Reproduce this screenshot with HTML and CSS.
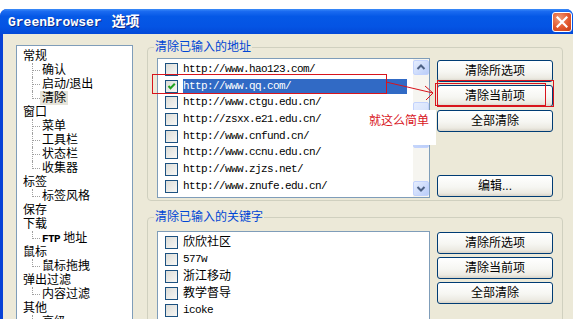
FILE: index.html
```html
<!DOCTYPE html>
<html lang="zh-CN">
<head>
<meta charset="utf-8">
<title>GreenBrowser 选项</title>
<link rel="stylesheet" href="styles.css">
</head>
<body>
<div class="window">
  <div class="titlebar">
    <span class="title">GreenBrowser <span class="title-cjk">选项</span></span>
    <span class="close"><svg width="12" height="12" viewBox="0 0 12 12"><path d="M1.5 1.5 L10.5 10.5 M10.5 1.5 L1.5 10.5" stroke="#fff" stroke-width="2.2" stroke-linecap="square"/></svg></span>
  </div>
  <div class="client">
    <ul class="tree">
      <li><span class="t">常规</span>
        <ul class="kids"><li><span class="tt">确认</span></li><li><span class="tt">启动/退出</span></li><li class="sel"><span class="tt">清除</span></li></ul>
      </li>
      <li><span class="t">窗口</span>
        <ul class="kids"><li><span class="tt">菜单</span></li><li><span class="tt">工具栏</span></li><li><span class="tt">状态栏</span></li><li><span class="tt">收集器</span></li></ul>
      </li>
      <li><span class="t">标签</span>
        <ul class="kids"><li><span class="tt">标签风格</span></li></ul>
      </li>
      <li><span class="t">保存</span></li>
      <li><span class="t">下载</span>
        <ul class="kids"><li><span class="tt"><span class="lat-b">FTP</span> 地址</span></li></ul>
      </li>
      <li><span class="t">鼠标</span>
        <ul class="kids"><li><span class="tt">鼠标拖拽</span></li></ul>
      </li>
      <li><span class="t">弹出过滤</span>
        <ul class="kids"><li><span class="tt">内容过滤</span></li></ul>
      </li>
      <li><span class="t">其他</span>
        <ul class="kids"><li><span class="tt">高级</span></li></ul>
      </li>
    </ul>

    <div class="panel">
      <fieldset class="group g-addr">
        <legend>清除已输入的地址</legend>
        <div class="gbody">
          <div class="listbox lb-addr">
            <div class="items">
              <div class="row"><span class="cb"></span><span class="lbl lat">http://www.hao123.com/</span></div>
              <div class="row"><span class="cb on"><svg width="11" height="11" viewBox="0 0 11 11"><path d="M2.5 5 L4.5 7.2 L8.8 2.8" fill="none" stroke="#21A121" stroke-width="2"/></svg></span><span class="lbl lat sel">http://www.qq.com/</span></div>
              <div class="row"><span class="cb"></span><span class="lbl lat">http://www.ctgu.edu.cn/</span></div>
              <div class="row"><span class="cb"></span><span class="lbl lat">http://zsxx.e21.edu.cn/</span></div>
              <div class="row"><span class="cb"></span><span class="lbl lat">http://www.cnfund.cn/</span></div>
              <div class="row"><span class="cb"></span><span class="lbl lat">http://www.ccnu.edu.cn/</span></div>
              <div class="row"><span class="cb"></span><span class="lbl lat">http://www.zjzs.net/</span></div>
              <div class="row"><span class="cb"></span><span class="lbl lat">http://www.znufe.edu.cn/</span></div>
            </div>
            <div class="sb">
              <span class="sbtn"><svg width="14" height="13" viewBox="0 0 14 13"><path d="M3.5 8 L7 4.5 L10.5 8" fill="none" stroke="#4D6185" stroke-width="2"/></svg></span>
              <span class="thumb"><i></i><i></i><i></i><i></i></span>
              <span class="sbtn down"><svg width="14" height="13" viewBox="0 0 14 13"><path d="M3.5 5 L7 8.5 L10.5 5" fill="none" stroke="#4D6185" stroke-width="2"/></svg></span>
            </div>
          </div>
          <div class="btns">
            <span class="btn">清除所选项</span>
            <span class="btn">清除当前项</span>
            <span class="btn">全部清除</span>
            <span class="btn btn-edit">编辑...</span>
          </div>
        </div>
      </fieldset>

      <fieldset class="group g-kw">
        <legend>清除已输入的关键字</legend>
        <div class="gbody">
          <div class="listbox lb-kw">
            <div class="items">
              <div class="row"><span class="cb"></span><span class="lbl">欣欣社区</span></div>
              <div class="row"><span class="cb"></span><span class="lbl lat">577w</span></div>
              <div class="row"><span class="cb"></span><span class="lbl">浙江移动</span></div>
              <div class="row"><span class="cb"></span><span class="lbl">教学督导</span></div>
              <div class="row"><span class="cb"></span><span class="lbl lat">icoke</span></div>
            </div>
          </div>
          <div class="btns">
            <span class="btn">清除所选项</span>
            <span class="btn">清除当前项</span>
            <span class="btn">全部清除</span>
          </div>
        </div>
      </fieldset>
    </div>

    <div class="mark mark-row"></div>
    <svg class="arrow" width="54" height="26" viewBox="0 0 54 26"><path d="M2 6 L49 17 M49 17 L41 10 M49 17 L42 24" fill="none" stroke="#D8141C" stroke-width="1"/></svg>
    <div class="mark mark-btn-a"></div>
    <div class="mark mark-btn-b"></div>
    <div class="note">就这么简单</div>
  </div>
</div>
</body>
</html>
```

FILE: styles.css
```css
* { box-sizing: border-box; }
html, body { margin: 0; padding: 0; }
body {
  width: 573px;
  height: 319px;
  overflow: hidden;
  background: #fff;
  font-family: "Liberation Sans", "Noto Sans CJK SC", sans-serif;
  font-size: 12px;
  color: #000;
}

.window {
  margin-top: 9px;
  width: 573px;
  height: 310px;
  border-radius: 7px 7px 0 0;
  background: #0842D6;
  overflow: hidden;
  display: flex;
  flex-direction: column;
}

.titlebar {
  height: 25px;
  flex: none;
  display: flex;
  align-items: center;
  justify-content: space-between;
  padding: 0 1px 0 8px;
  background: linear-gradient(#3C8CF8 0, #1A6AF0 10%, #0558E6 30%, #0454E4 70%, #0349D8 100%);
}
.title {
  color: #fff;
  font-family: "Liberation Mono", "Noto Sans CJK SC", monospace;
  font-weight: bold;
  font-size: 13px;
  line-height: 16px;
  white-space: nowrap;
  text-shadow: 1px 1px #0D2B8C;
}
.title-cjk {
  font-family: "Liberation Sans", "Noto Sans CJK SC", sans-serif;
  font-size: 14px;
  margin-left: 2px;
}
.close {
  width: 20px;
  height: 20px;
  border: 1px solid #fff;
  border-radius: 3px;
  background: radial-gradient(circle at 35% 30%, #F09A78 0, #E2572D 55%, #C43E16 100%);
  display: flex;
  align-items: center;
  justify-content: center;
}

.client {
  position: relative;
  flex: 1;
  margin-left: 3px;
  background: #ECE9D8;
  display: flex;
  align-items: flex-start;
  gap: 14px;
  padding: 7px 0 0 13px;
}

/* tree */
.tree {
  list-style: none;
  margin: 4px 0 0 0;
  padding: 3px 0 0 0;
  width: 117px;
  height: 300px;
  flex: none;
  border: 1px solid #7F9DB9;
  background: #fff;
  overflow: hidden;
}
.tree ul { list-style: none; margin: 0; padding: 0; }
.tree li { line-height: 14px; }
.t {
  display: block;
  height: 14px;
  padding-left: 6px;
  white-space: nowrap;
}
.kids li {
  position: relative;
  height: 14px;
  padding-left: 23px;
  white-space: nowrap;
}
.kids li::before {
  content: "";
  position: absolute;
  left: 15px;
  top: 0;
  width: 7px;
  height: 7px;
  border-left: 1px dotted #A0A0A0;
  border-bottom: 1px dotted #A0A0A0;
}
.kids li:not(:last-child)::after {
  content: "";
  position: absolute;
  left: 15px;
  top: 7px;
  bottom: 0;
  border-left: 1px dotted #A0A0A0;
}
.tt {
  display: inline-block;
  height: 14px;
  padding: 0 2px;
}
.kids li.sel .tt { background: #E6E4DA; }
.lat-b {
  font-family: "Liberation Mono", monospace;
  font-size: 11px;
  font-weight: bold;
  letter-spacing: -0.6px;
}

/* right panel */
.panel {
  width: 416px;
  flex: none;
  display: flex;
  flex-direction: column;
  gap: 10px;
}
.group {
  margin: 0;
  padding: 5px 9px 2px 9px;
  border: 1px solid #D0D0BF;
  border-radius: 4px;
  min-width: 0;
}
.group legend {
  padding: 0 1px;
  margin-left: -3px;
  font-size: 12px;
  line-height: 12px;
  color: #0046D5;
}
.g-kw {
  padding-top: 8px;
  height: 140px;
}
.gbody {
  display: flex;
  gap: 7px;
  align-items: stretch;
  height: 100%;
}

.listbox {
  width: 273px;
  flex: none;
  border: 1px solid #7F9DB9;
  background: #fff;
  display: flex;
}
.lb-addr { height: 140px; }
.lb-kw { height: 120px; }
.items {
  flex: 1;
  min-width: 0;
  padding-top: 2px;
}
.lb-kw .items { padding-top: 2px; }
.row {
  display: flex;
  align-items: center;
  height: 16.7px;
  padding-left: 7px;
}
.lb-kw .row { height: 17px; }
.cb {
  width: 13px;
  height: 13px;
  flex: none;
  margin-right: 5px;
  border: 1px solid #1C5180;
  background: linear-gradient(135deg, #DCDCD7, #F7F7F5);
  display: flex;
  align-items: center;
  justify-content: center;
}
.lbl {
  flex: 1;
  height: 15px;
  line-height: 15px;
  margin-right: 6px;
  white-space: nowrap;
}
.lbl.sel { background: #316AC5; color: #fff; }
.lat {
  font-family: "Liberation Mono", monospace;
  font-size: 11px;
  letter-spacing: -0.6px;
}

/* scrollbar */
.sb {
  width: 16px;
  flex: none;
  background: #F6F5F0;
  display: flex;
  flex-direction: column;
  padding: 1px 0 1px 0;
}
.sbtn, .thumb {
  display: flex;
  align-items: center;
  justify-content: center;
  border: 1px solid #C3D3FD;
  border-radius: 2px;
  background: linear-gradient(135deg, #E6EEFE, #BACDF9);
}
.sbtn { height: 15px; }
.sbtn.down { margin-top: auto; }
.thumb {
  margin-top: 27px;
  height: 46px;
  flex-direction: column;
  gap: 1px;
}
.thumb i {
  display: block;
  width: 7px;
  height: 1px;
  background: #8CB0F8;
}

/* buttons */
.btns {
  width: 116px;
  flex: none;
  display: flex;
  flex-direction: column;
  gap: 3px;
  padding: 2px 0 1px 0;
}
.g-kw .btns { padding-top: 1px; }
.btn {
  height: 22px;
  flex: none;
  display: flex;
  align-items: center;
  justify-content: center;
  border: 1px solid #003C74;
  border-radius: 3px;
  background: linear-gradient(#FFFFFF 0, #F6F6F2 55%, #ECEAE2 85%, #D8D3C8 100%);
  font-size: 12px;
  line-height: 14px;
}
.btn-edit { margin-top: auto; }

/* annotations */
.mark {
  position: absolute;
  border: 1px solid #D8141C;
}
.mark-row { left: 149px; top: 40px; width: 235px; height: 20px; }
.mark-btn-a { left: 434px; top: 46px; width: 117px; height: 27px; }
.mark-btn-b { left: 432px; top: 49px; width: 111px; height: 23px; }
.arrow { position: absolute; left: 381px; top: 42px; }
.note {
  position: absolute;
  left: 361px;
  top: 76px;
  width: 72px;
  height: 35px;
  background: #fff;
  color: #D8141C;
  font-size: 12px;
  line-height: 12px;
  padding: 5px 0 0 5px;
  white-space: nowrap;
}
```
